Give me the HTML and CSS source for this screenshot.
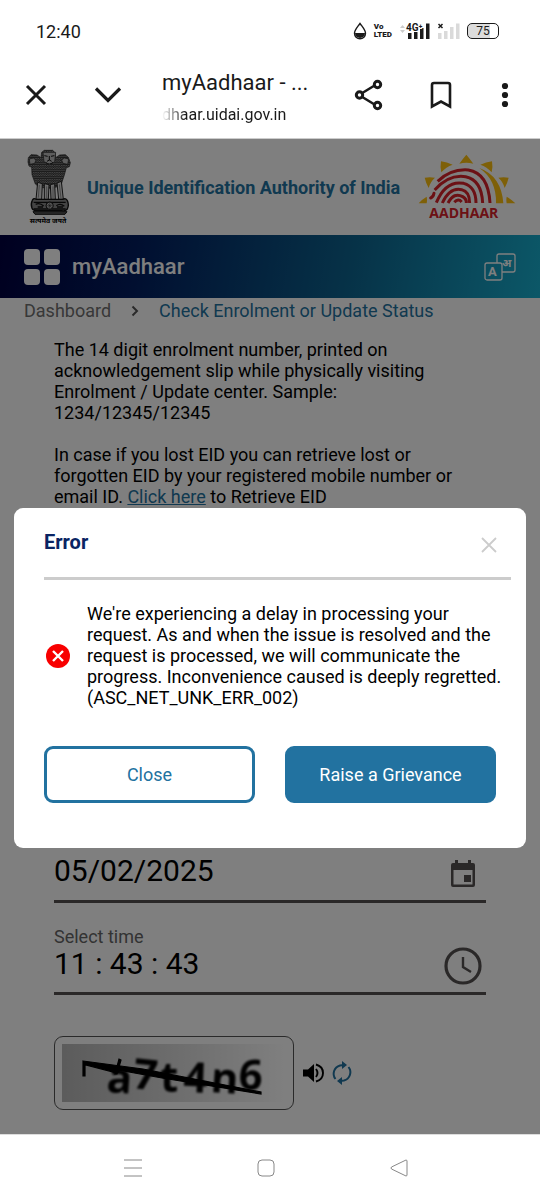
FILE: index.html
```
<!DOCTYPE html>
<html lang="en">
<head>
    <meta charset="UTF-8">
    <meta name="viewport" content="width=device-width, initial-scale=1.0">
    <title>myAadhaar - Check Enrolment or Update Status</title>
    <link rel="stylesheet" href="styles.css">
</head>
<body>

    <div class="status-bar">
        <span class="clock">12:40</span>
        <div class="status-icons">
            <svg width="14" height="18" viewBox="0 0 14 18"><path d="M7 1.500C4.500 5 1.500 8 1.500 11.300a5.500 5.500 0 0 0 11 0C12.500 8 9.500 5 7 1.500z" fill="none" stroke="#1a1a1a" stroke-width="1.400"/><path d="M2 11h10a5 5 0 0 1-10 0z" fill="#1a1a1a"/></svg>
            <span class="volte">Vo<br>LTED</span>
            <svg width="31" height="18" viewBox="0 0 31 18">
                <path d="M1 6l2.500-3L6 6zM1 8l2.500 3L6 8z" fill="#ccc"/>
                <path d="M9 11h3.500v6H9zM15 10h3.500v7H15zM21 6h3.500v11H21zM27 1.500h3.500V17H27z" fill="#1a1a1a"/>
                <text x="7" y="9" class="net">4G⁺</text>
            </svg>
            <svg width="23" height="18" viewBox="0 0 23 18">
                <path d="M1 11h3.500v6H1zM7 9h3.500v8H7zM13 5h3.500v12H13zM19 1.500h3.500V17H19z" fill="#dadada"/>
                <path d="M1.500 2l4 4M5.500 2l-4 4" stroke="#1a1a1a" stroke-width="1.500"/>
            </svg>
            <span class="battery">75</span>
        </div>
    </div>

    <div class="toolbar">
        <button class="tool" aria-label="Close tab"><svg width="22" height="22" viewBox="0 0 22 22"><path d="M2 2l18 18M20 2L2 20" stroke-width="3"/></svg></button>
        <button class="tool" aria-label="Minimize"><svg width="28" height="18" viewBox="0 0 28 18"><path d="M2 2.500l12 12 12-12" stroke-width="3.200"/></svg></button>
        <div class="tab-info">
            <div class="tab-title">myAadhaar - ...</div>
            <div class="tab-url">dhaar.uidai.gov.in</div>
        </div>
        <button class="tool" aria-label="Share"><svg width="30" height="32" viewBox="0 0 30 32"><path d="M5 16L23 5M5 16l18 11" stroke-width="2.600"/><g fill="#fff" stroke-width="3"><circle cx="5.500" cy="16" r="3.200"/><circle cx="23.500" cy="5.500" r="3.200"/><circle cx="23.500" cy="26.500" r="3.200"/></g></svg></button>
        <button class="tool" aria-label="Bookmark"><svg width="22" height="28" viewBox="0 0 22 28"><path d="M2 25.500V4q0-2 2-2h14q2 0 2 2v21.500l-9-5z" stroke-width="2.600"/></svg></button>
        <button class="tool more" aria-label="More"><svg width="8" height="26" viewBox="0 0 8 26"><g fill="#1a1a1a" stroke="none"><circle cx="4" cy="4" r="3.100"/><circle cx="4" cy="13" r="3.100"/><circle cx="4" cy="22" r="3.100"/></g></svg></button>
    </div>

    <div class="viewport">
        <header class="header">
            <div class="emblem">
                <svg width="45" height="67" viewBox="75 25 135 201">
                    <defs>
                        <pattern id="mane" width="7" height="7" patternUnits="userSpaceOnUse">
                            <rect width="7" height="7" fill="#333"/>
                            <path d="M0 1q3.500 5 7 0" fill="none" stroke="#bbb" stroke-width="2"/>
                        </pattern>
                    </defs>
                    <path d="M82 48l8-9 18 1 12 8 2-16 8-6h25l7 7 2 15 12-8 17-1 9 8 6 16-3 12-9 3-6 22-8 24-12 11-22 5-32-3-13-10-10-28-1-22-8-4-3-12z" fill="url(#mane)" stroke="#222" stroke-width="2"/>
                    <path d="M85 52l12-3 8 6-4 10-14 3zM203 52l-13-3-8 6 4 10 14 3z" fill="#bbb" stroke="#222" stroke-width="2"/>
                    <path d="M126 32h38l-3 28-16 10-16-10z" fill="#bbb" stroke="#222" stroke-width="2"/>
                    <path d="M130 42l10 2M150 44l10-2M145 43v12l-7 4M145 55l7 4M134 62q11 10 22 0" fill="none" stroke="#111" stroke-width="3"/>
                    <path d="M110 122l-5 51h17l2-47zM130 126v47h12l2-44zM148 129l2 44h13l-2-47zM168 124l5 49h14l-6-54z" fill="#ddd" stroke="#222" stroke-width="3"/>
                    <path d="M115 130l-3 38M137 134v36M156 134v36M175 128l5 42" stroke="#666" stroke-width="2"/>
                    <path d="M94 176q3-8 12-3h79q10-5 14 4 6 12 0 25-5 7-17 5h-72q-14 1-17-7-5-12 1-24z" fill="#888" stroke="#111" stroke-width="4"/>
                    <path d="M98 182h96M98 202h96" stroke="#111" stroke-width="4"/>
                    <circle cx="146" cy="192" r="11" fill="#bbb" stroke="#111" stroke-width="3"/>
                    <path d="M146 181v22M135 192h22M138 184l16 16M154 184l-16 16" stroke="#222" stroke-width="1.500"/>
                    <path d="M104 188q12-6 24 5M166 192q12-9 24 2M110 196h16M168 196h18" fill="none" stroke="#111" stroke-width="4"/>
                    <path d="M96 210h102l-6 8H102z" fill="#555" stroke="#111" stroke-width="3"/>
                </svg>
                <span class="motto" lang="hi">सत्यमेव जयते</span>
            </div>
            <h1 class="org">Unique Identification Authority of India</h1>
            <svg class="logo" width="98" height="70" viewBox="84 36 294 210">
                <g fill="#fdc010">
                    <path d="M229 44q12 14 21 27-21-5-42 0 9-13 21-27z"/>
                    <path d="M153 64q18 3 35 10-20 7-34 23-4-17-1-33z"/>
                    <path d="M306 64q-18 3-35 10 20 7 34 23 4-17 1-33z"/>
                    <path d="M104 113q15-3 31 0-14 12-19 31-8-14-12-31z"/>
                    <path d="M356 113q-15-3-31 0 14 12 19 31 8-14 12-31z"/>
                    <path d="M86 190q10-12 24-20 2 10 0 20zM376 190q-12-12-26-20-2 10 0 20z"/>
                    <path d="M268 84q66 24 72 106h-22q2-70-50-106z"/>
                </g>
                <g fill="none" stroke="#d8232a" stroke-width="9">
                    <path d="M143 124q40-38 92-34 60 10 65 99"/>
                    <path d="M134 150q42-48 93-40 48 10 51 79"/>
                    <path d="M122 174q8-3 10-14" stroke-linecap="round"/>
                    <path d="M139 188q28-68 82-58 37 10 37 59"/>
                    <path d="M157 189q22-48 58-40 24 6 24 40"/>
                    <path d="M174 189q18-34 44-19 12 7 11 19"/>
                    <path d="M193 187q12-13 22-1"/>
                </g>
                <text x="118" y="234" class="logo-text">AADHAAR</text>
            </svg>
        </header>

        <nav class="navbar">
            <a href="#" class="brand">
                <span class="grid-icon"><i></i><i></i><i></i><i></i></span>
                myAadhaar
            </a>
            <button class="lang-btn" aria-label="Change language">
                <svg width="32" height="28" viewBox="0 0 32 28">
                    <g fill="none" stroke="#fff" stroke-width="1.300">
                        <path d="M13 10V3q0-2 2-2h14q2 0 2 2v14q0 2-2 2H18"/>
                        <rect x="1" y="10" width="17" height="17" rx="2"/>
                    </g>
                    <text x="4" y="23" class="lang-a">A</text>
                    <text x="18" y="14" class="lang-hi">अ</text>
                </svg>
            </button>
        </nav>

        <div class="breadcrumb">
            <a href="#" class="crumb">Dashboard</a>
            <svg width="8" height="12" viewBox="0 0 8 12"><path d="M1.500 1.500L6 6l-4.500 4.500" fill="none" stroke="#555" stroke-width="2"/></svg>
            <a href="#" class="crumb-active">Check Enrolment or Update Status</a>
        </div>

        <main class="content">
            <p>The 14 digit enrolment number, printed on acknowledgement slip while physically visiting Enrolment / Update center. Sample: 1234/12345/12345</p>
            <p>In case if you lost EID you can retrieve lost or forgotten EID by your registered mobile number or email ID. <a href="#" class="link">Click here</a> to Retrieve EID</p>

            <form class="form">
                <div class="field">
                    <input type="text" id="date" value="05/02/2025" aria-label="Date">
                    <button type="button" class="field-btn" aria-label="Open calendar">
                        <svg width="28" height="28" viewBox="0 0 28 28"><path d="M2 5q0-2 2-2h2V0h3v3h10V0h3v3h2q2 0 2 2v20q0 2-2 2H4q-2 0-2-2zM4.500 10v14.500h19V10zM15 15h7v7h-7z" fill="#545050" fill-rule="evenodd"/></svg>
                    </button>
                </div>
                <label for="time">Select time</label>
                <div class="field time-field">
                    <input type="text" id="time" value="11 : 43 : 43">
                    <button type="button" class="field-btn" aria-label="Open clock">
                        <svg width="38" height="38" viewBox="0 0 38 38"><circle cx="19" cy="19" r="17" fill="none" stroke="#545050" stroke-width="3.200"/><path d="M19 10v10l8 5" fill="none" stroke="#545050" stroke-width="2.400"/></svg>
                    </button>
                </div>
                <div class="captcha-row">
                    <div class="captcha">
                        <svg width="224" height="58" viewBox="0 0 224 58">
                            <defs>
                                <linearGradient id="shade"><stop offset="0" stop-color="#b8b8b8"/><stop offset="0.500" stop-color="#dadada"/><stop offset="1" stop-color="#fff"/></linearGradient>
                                <filter id="soft"><feGaussianBlur stdDeviation="0.800"/></filter>
                            </defs>
                            <rect width="224" height="58" fill="url(#shade)"/>
                            <g class="captcha-text" filter="url(#soft)">
                                <text x="44" y="48" rotate="4">a</text>
                                <text x="70" y="44" rotate="6">7</text>
                                <text x="98" y="48">t</text>
                                <text x="121" y="48" rotate="2">4</text>
                                <text x="148" y="48" rotate="4">n</text>
                                <text x="176" y="45" rotate="3">6</text>
                            </g>
                            <path d="M21 17l60 8 118 23v2L100 34 23 20v12h-2zM24 18l34 8-3 3-31-8zM53 30l4-15 2 1-4 14z" fill="#000" stroke="#000" stroke-width="1.200"/>
                        </svg>
                    </div>
                    <button type="button" class="icon-btn" aria-label="Play captcha">
                        <svg width="22" height="20" viewBox="0 0 22 20"><path d="M1 6.500h5L12 1v18l-6-5.500H1z" fill="#000"/><path d="M14 6q3 4 0 8M14 1.500q7 2 7 8.500t-7 8.500" fill="none" stroke="#000" stroke-width="1.900"/></svg>
                    </button>
                    <button type="button" class="icon-btn" aria-label="Refresh captcha">
                        <svg width="20" height="24" viewBox="0 0 20 24"><path d="M3.500 18A8.500 8.500 0 0 1 8 4.500L12 4M16.500 6A8.500 8.500 0 0 1 12 19.500L8 20" fill="none" stroke="#2272a0" stroke-width="2"/><path d="M10 0l5 4-5 4zM10 16l-5 4 5 4z" fill="#2272a0"/></svg>
                    </button>
                </div>
            </form>
        </main>

        <div class="overlay">
            <div class="dialog" role="dialog" aria-labelledby="dialogTitle">
                <div class="dialog-header">
                    <h2 id="dialogTitle">Error</h2>
                    <button class="dialog-x" aria-label="Dismiss"><svg width="16" height="16" viewBox="0 0 16 16"><path d="M1 1l14 14M15 1L1 15" stroke="#ccc" stroke-width="1.800"/></svg></button>
                </div>
                <div class="dialog-body">
                    <svg width="24" height="24" viewBox="0 0 24 24"><circle cx="12" cy="12" r="12" fill="#f80000"/><path d="M7 7l10 10M17 7L7 17" stroke="#fff" stroke-width="2.400"/></svg>
                    <p>We're experiencing a delay in processing your request. As and when the issue is resolved and the request is processed, we will communicate the progress. Inconvenience caused is deeply regretted. (ASC_NET_UNK_ERR_002)</p>
                </div>
                <div class="dialog-actions">
                    <button class="btn">Close</button>
                    <button class="btn btn-primary">Raise a Grievance</button>
                </div>
            </div>
        </div>
    </div>

    <div class="android-nav">
        <button aria-label="Recents"><svg width="18" height="18" viewBox="0 0 18 18"><path d="M0 1h18M0 9h18M0 17h18"/></svg></button>
        <button aria-label="Home"><svg width="18" height="18" viewBox="0 0 18 18"><rect x="1" y="1" width="16" height="16" rx="4"/></svg></button>
        <button aria-label="Back"><svg width="18" height="18" viewBox="0 0 18 18"><path d="M16 1L1.500 8q-1 1 0 2L16 17q1 0 1-1V2q0-1-1-1z"/></svg></button>
    </div>

</body>
</html>
```
FILE: styles.css
```
* { box-sizing: border-box; margin: 0; padding: 0; font-family: Roboto, "Noto Sans", sans-serif; }
body { display: flex; flex-direction: column; min-height: 100vh; background: #fff; color: #000; font-size: 18px; line-height: 21px; }
button { background: none; border: none; cursor: pointer; }
a { text-decoration: none; }
svg { display: block; flex: none; overflow: visible; }

/* phone status bar */
.status-bar { display: flex; align-items: center; justify-content: space-between; height: 62px; padding: 0 41px 0 36px; color: #1a1a1a; }
.clock { font-size: 18px; }
.status-icons { display: flex; align-items: center; gap: 7px; }
.volte { font-size: 8px; line-height: 8px; font-weight: 900; }
.net { font-size: 10px; font-weight: bold; fill: #1a1a1a; stroke: #fff; stroke-width: 2px; paint-order: stroke; }
.battery { width: 32px; height: 16px; border: 1px solid #1a1a1a; border-radius: 5px; background: linear-gradient(90deg, #dcdcdc 75%, #fff 75%); font-size: 12px; line-height: 14px; text-align: center; }

/* browser toolbar */
.toolbar { display: flex; align-items: center; height: 77px; padding: 0 7px 10px 0; border-bottom: 1px solid #ccc; color: #1a1a1a; }
.tool { display: flex; align-items: center; justify-content: center; width: 72px; height: 48px; }
.tool svg { fill: none; stroke: #1a1a1a; }
.more { width: 56px; }
.tab-info { flex: 1; min-width: 0; padding: 8px 0 0 18px; }
.tab-title { font-size: 22px; line-height: 28px; white-space: nowrap; }
.tab-url { margin-top: 4px; font-size: 16px; line-height: 28px; -webkit-mask-image: linear-gradient(90deg, transparent, #000 24px); mask-image: linear-gradient(90deg, transparent, #000 24px); }

/* page */
.viewport { position: relative; flex: 1; overflow: hidden; }
.header { display: flex; align-items: center; height: 96px; padding: 0 24px 0 25px; }
.emblem { display: flex; flex-direction: column; align-items: center; width: 46px; }
.motto { font-size: 7px; line-height: 8px; font-weight: bold; white-space: nowrap; }
.org { flex: 1; padding-left: 16px; color: #2272a0; font-size: 18px; font-weight: bold; white-space: nowrap; }
.logo-text { fill: #d8232a; font-family: "Open Sans", sans-serif; font-size: 42px; font-weight: bold; }
.navbar { display: flex; align-items: center; justify-content: space-between; height: 63px; padding: 0 24px; background: linear-gradient(100deg, #000040, #021d60 25%, #0d6590 65%, #18b0d0); }
.brand { display: flex; align-items: center; gap: 12px; color: #fff; font-size: 22px; font-weight: 500; }
.grid-icon { display: grid; grid-template-columns: 16px 16px; grid-auto-rows: 16px; gap: 4px; }
.grid-icon i { background: #fff; border-radius: 4px; }
.lang-a { fill: #fff; font-size: 13px; font-weight: bold; }
.lang-hi { fill: #fff; font-size: 11px; font-weight: bold; }
.breadcrumb { display: flex; align-items: center; gap: 20px; padding: 2px 24px 3px; }
.crumb { color: #707070; }
.crumb-active { color: #2272a0; }
.content { padding: 15px 54px 24px; }
.content p { margin-bottom: 21px; }
.link { color: #2272a0; text-decoration: underline; }

.form { padding-top: 320px; }
.field { display: flex; align-items: center; height: 55px; border-bottom: 3px solid #545050; }
.time-field { height: 48px; padding-bottom: 8px; }
.field input { flex: 1; min-width: 0; height: 40px; margin-bottom: 8px; border: none; background: none; font-size: 30px; color: #000; }
.time-field input { margin-bottom: 4px; }
.field-btn { display: flex; justify-content: center; width: 46px; }
.form label { display: block; margin-top: 23px; color: #666; }
.captcha-row { display: flex; align-items: center; gap: 8px; margin-top: 41px; }
.captcha { padding: 7px; border: 1px solid #555; border-radius: 9px; }
.captcha-text { font-family: "Open Sans", sans-serif; font-size: 42px; font-weight: bold; }
.captcha-text text { font-family: inherit; }

/* error dialog */
.overlay { position: absolute; inset: 0; display: flex; align-items: center; padding: 83px 14px 0; background: rgba(0, 0, 0, 0.5); }
.dialog { width: 100%; padding: 0 15px 45px 30px; background: #fff; border-radius: 9px; }
.dialog-header { display: flex; align-items: center; justify-content: space-between; height: 72px; padding-right: 14px; border-bottom: 3px solid #ccc; }
.dialog-header h2 { color: #0a2463; font-size: 20px; font-weight: bold; }
.dialog-x { padding-top: 4px; }
.dialog-body { display: flex; align-items: center; gap: 17px; padding: 23px 0 38px 2px; }
.dialog-actions { display: flex; gap: 30px; padding-right: 15px; }
.btn { flex: 1; height: 57px; border: 3px solid #2272a0; border-radius: 9px; color: #2272a0; font-size: 18px; }
.btn-primary { background: #2272a0; color: #fff; }

/* phone navigation keys */
.android-nav { display: grid; grid-template-columns: repeat(3, 1fr); height: 66px; padding: 0 74px 0 66px; border-top: 1px solid #ddd; }
.android-nav button { display: flex; align-items: center; justify-content: center; }
.android-nav svg { fill: none; stroke: #888; stroke-width: 1; }
```
